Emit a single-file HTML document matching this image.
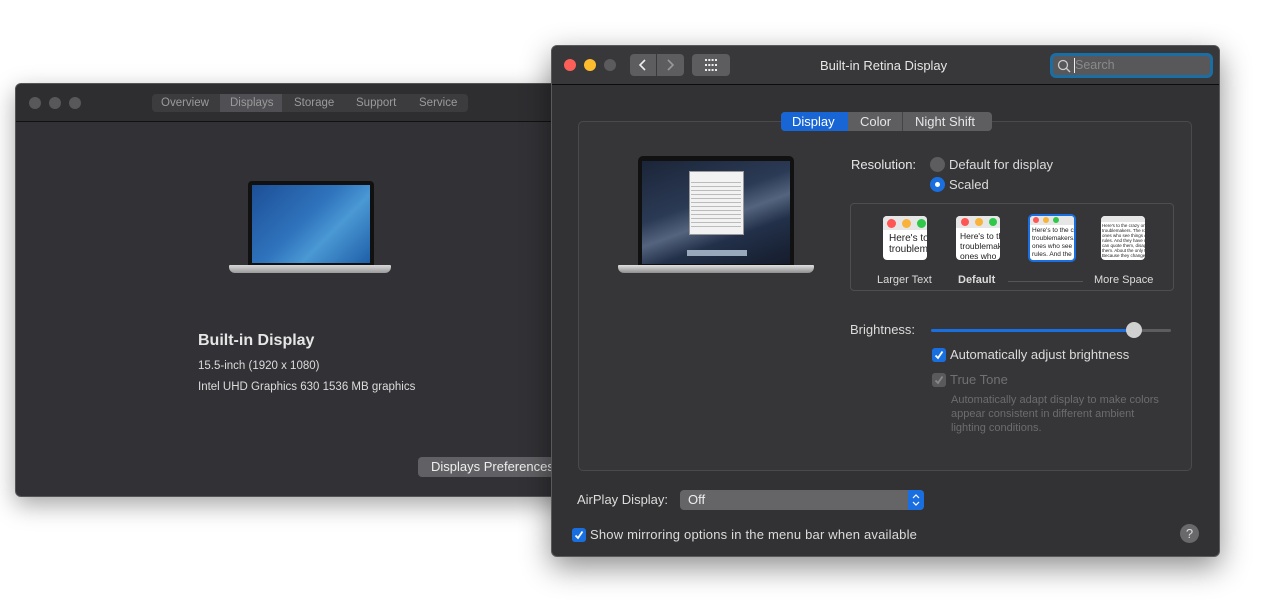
<!DOCTYPE html>
<html><head><style>
*{box-sizing:border-box;margin:0;padding:0}
body{width:1281px;height:608px;background:#fff;position:relative;overflow:hidden;font-family:"Liberation Sans",sans-serif;color:#dcdcdc}
.abs{position:absolute}
.win{position:absolute;border-radius:6px;overflow:hidden}
.dot{position:absolute;width:12px;height:12px;border-radius:50%}
.t{position:absolute;white-space:nowrap}
.cb{position:absolute;width:14px;height:14px;border-radius:3px;background:#1a6fe0}
.cb svg{position:absolute;left:1px;top:1px}
.th div{white-space:nowrap}
</style></head><body>

<!-- back window -->
<div class="win" style="left:15px;top:83px;width:560px;height:414px;background:#323236;box-shadow:0 8px 24px rgba(0,0,0,.35);border:1px solid #555">
 <div class="abs" style="left:0;top:0;width:100%;height:38px;background:#2e2e31;border-bottom:1px solid #111"></div>
 <div class="dot" style="left:13px;top:13px;background:#58585b"></div>
 <div class="dot" style="left:33px;top:13px;background:#58585b"></div>
 <div class="dot" style="left:53px;top:13px;background:#58585b"></div>
 <div class="abs" style="left:136px;top:10px;width:316px;height:18px;background:#3c3c3f;border-radius:4px;font-size:11.5px;color:#9a9a9c">
  <span class="t" style="left:9px;top:3px">Overview</span>
  <div class="abs" style="left:68px;top:0;width:62px;height:18px;background:#505054"></div>
  <span class="t" style="left:78px;top:3px">Displays</span>
  <span class="t" style="left:142px;top:3px">Storage</span>
  <span class="t" style="left:204px;top:3px">Support</span>
  <span class="t" style="left:267px;top:3px">Service</span>
 </div>
 <div class="abs" style="left:232px;top:97px;width:126px;height:84px;background:#111;border-radius:4px 4px 0 0"></div>
 <div class="abs" style="left:236px;top:101px;width:118px;height:78px;background:linear-gradient(135deg,#1d4f96 0%,#2f74bd 45%,#4a98d4 65%,#1f5fa8 100%)"></div>
 <div class="abs" style="left:213px;top:181px;width:162px;height:8px;background:linear-gradient(#d8d8d8,#9a9a9a);border-radius:1px 1px 6px 6px"></div>
 <div class="t" style="left:182px;top:248px;font-size:16px;font-weight:bold;color:#e6e6e6">Built-in Display</div>
 <div class="t" style="left:182px;top:276px;font-size:11.5px;color:#dcdcdc">15.5-inch (1920 x 1080)</div>
 <div class="t" style="left:182px;top:297px;font-size:11.5px;color:#dcdcdc">Intel UHD Graphics 630 1536 MB graphics</div>
 <div class="abs" style="left:402px;top:373px;width:150px;height:20px;background:#616165;border-radius:4px;font-size:13px;color:#eee;padding:2px 0 0 13px">Displays Preferences</div>
</div>

<!-- front window -->
<div class="win" style="left:551px;top:45px;width:669px;height:512px;background:#323234;box-shadow:0 10px 30px rgba(0,0,0,.45);border:1px solid #5a5a5a">
 <div class="abs" style="left:0;top:0;width:100%;height:39px;background:#38383a;border-bottom:1px solid #0c0c0c"></div>
 <div class="dot" style="left:12px;top:13px;background:#fc5f57"></div>
 <div class="dot" style="left:32px;top:13px;background:#fdbb2e"></div>
 <div class="dot" style="left:52px;top:13px;background:#5b5b5d"></div>
 <div class="abs" style="left:78px;top:8px;width:54px;height:22px;background:#5d5d60;border-radius:4px"></div>
 <div class="abs" style="left:104px;top:8px;width:1px;height:22px;background:#3a3a3c"></div>
 <svg class="abs" style="left:78px;top:8px" width="54" height="22"><path d="M15 6 L10 11 L15 16" stroke="#eee" stroke-width="1.6" fill="none"/><path d="M38 6 L43 11 L38 16" stroke="#999" stroke-width="1.6" fill="none"/></svg>
 <div class="abs" style="left:140px;top:8px;width:38px;height:22px;background:#5d5d60;border-radius:4px"></div>
 <svg class="abs" style="left:153px;top:13px" width="12" height="12" fill="#eee"><rect x="0" y="0" width="2" height="2"/><rect x="3.3" y="0" width="2" height="2"/><rect x="6.6" y="0" width="2" height="2"/><rect x="10" y="0" width="2" height="2"/><rect x="0" y="5" width="2" height="2"/><rect x="3.3" y="5" width="2" height="2"/><rect x="6.6" y="5" width="2" height="2"/><rect x="10" y="5" width="2" height="2"/><rect x="0" y="10" width="2" height="2"/><rect x="3.3" y="10" width="2" height="2"/><rect x="6.6" y="10" width="2" height="2"/><rect x="10" y="10" width="2" height="2"/></svg>
 <div class="t" style="left:268px;top:12px;font-size:13px;color:#e6e6e6">Built-in Retina Display</div>
 <div class="abs" style="left:498px;top:7px;width:163px;height:25px;border:3px solid #1b6ea3;border-radius:6px;background:#58585a"></div>
 <svg class="abs" style="left:505px;top:13px" width="14" height="14"><circle cx="6" cy="6" r="4.5" stroke="#ccc" stroke-width="1.3" fill="none"/><path d="M9.3 9.3 L13 13" stroke="#ccc" stroke-width="1.4"/></svg>
 <div class="abs" style="left:522px;top:12px;width:1px;height:15px;background:#eee"></div>
 <div class="t" style="left:523px;top:12px;font-size:12.5px;color:#8a8a8a">Search</div>

 <div class="abs" style="left:26px;top:75px;width:614px;height:350px;border:1px solid #4a4a4c;border-radius:5px;background:#363638"></div>
 <div class="abs" style="left:229px;top:66px;width:211px;height:19px;background:#5e5e61;border-radius:4px;font-size:13px;color:#e6e6e6">
  <div class="abs" style="left:0;top:0;width:67px;height:19px;background:#1866d6;border-radius:4px 0 0 4px"></div>
  <span class="t" style="left:11px;top:2px;color:#fff">Display</span>
  <span class="t" style="left:79px;top:2px">Color</span>
  <div class="abs" style="left:121px;top:0;width:1px;height:19px;background:#444"></div>
  <span class="t" style="left:134px;top:2px">Night Shift</span>
 </div>

 <div class="abs" style="left:86px;top:110px;width:156px;height:110px;background:#111;border-radius:5px 5px 0 0"></div>
 <div class="abs" style="left:90px;top:115px;width:148px;height:103px;background:linear-gradient(160deg,#1b2538 0%,#2b3a55 40%,#55647e 55%,#223049 70%,#151c2c 100%)"></div>
 <div class="abs" style="left:137px;top:125px;width:55px;height:64px;background:#f2f2f2;border:1px solid #999"></div>
 <div class="abs" style="left:139px;top:133px;width:50px;height:50px;background:repeating-linear-gradient(#f2f2f2 0 3px,#bbb 3px 4px)"></div>
 <div class="abs" style="left:135px;top:204px;width:60px;height:6px;background:#9aa8bb"></div>
 <div class="abs" style="left:66px;top:219px;width:196px;height:8px;background:linear-gradient(#e0e0e0,#8e8e8e);border-radius:1px 1px 6px 6px"></div>

 <div class="t" style="left:299px;top:111px;font-size:13px;color:#e6e6e6">Resolution:</div>
 <div class="abs" style="left:378px;top:111px;width:15px;height:15px;border-radius:50%;background:#5d5d60"></div>
 <div class="t" style="left:397px;top:111px;font-size:13px">Default for display</div>
 <div class="abs" style="left:378px;top:131px;width:15px;height:15px;border-radius:50%;background:#1a6fe0"></div>
 <div class="abs" style="left:383px;top:136px;width:5px;height:5px;border-radius:50%;background:#fff"></div>
 <div class="t" style="left:397px;top:131px;font-size:13px">Scaled</div>

 <div class="abs" style="left:298px;top:157px;width:324px;height:88px;border:1px solid #4e4e50;border-radius:4px;background:#363638"></div>
 <div class="abs th" style="left:331px;top:170px;width:44px;height:44px;background:#fff;border-radius:4px;overflow:hidden;font-size:10px;color:#222">
  <div style="height:14px;background:#e6e6e6"></div>
  <div class="dot" style="left:4px;top:3px;width:9px;height:9px;background:#f55"></div><div class="dot" style="left:19px;top:3px;width:9px;height:9px;background:#f9b33a"></div><div class="dot" style="left:34px;top:3px;width:9px;height:9px;background:#2fc84a"></div>
  <div style="padding:3px 0 0 6px;line-height:11px">Here's to<br>troublem</div></div>
 <div class="abs th" style="left:404px;top:170px;width:44px;height:44px;background:#fff;border-radius:4px;overflow:hidden;font-size:8.5px;color:#222">
  <div style="height:12px;background:#e6e6e6"></div>
  <div class="dot" style="left:5px;top:2px;width:8px;height:8px;background:#f55"></div><div class="dot" style="left:19px;top:2px;width:8px;height:8px;background:#f9b33a"></div><div class="dot" style="left:33px;top:2px;width:8px;height:8px;background:#2fc84a"></div>
  <div style="padding:3px 0 0 4px;line-height:10px">Here's to th<br>troublemak<br>ones who</div></div>
 <div class="abs th" style="left:476px;top:168px;width:48px;height:48px;border:2px solid #1a6fe0;border-radius:5px;background:#fff;overflow:hidden;font-size:6.5px;color:#222">
  <div style="height:9px;background:#e6e6e6"></div>
  <div class="dot" style="left:3px;top:1px;width:6px;height:6px;background:#f55"></div><div class="dot" style="left:13px;top:1px;width:6px;height:6px;background:#f9b33a"></div><div class="dot" style="left:23px;top:1px;width:6px;height:6px;background:#2fc84a"></div>
  <div style="padding:2px 0 0 2px;line-height:8px">Here's to the cr<br>troublemakers.<br>ones who see t<br>rules. And the</div></div>
 <div class="abs th" style="left:549px;top:170px;width:44px;height:44px;background:#fff;border-radius:4px;overflow:hidden;font-size:4.5px;color:#222">
  <div style="height:6px;background:#e6e6e6"></div>
  <div style="padding:1px 0 0 1px;line-height:5px">Here's to the crazy one<br>troublemakers. The rou<br>ones who see things di<br>rules. And they have no<br>can quote them, disagr<br>them. About the only th<br>Because they change</div></div>
 <div class="t" style="left:325px;top:228px;font-size:11px">Larger Text</div>
 <div class="t" style="left:406px;top:228px;font-size:11px;font-weight:bold">Default</div>
 <div class="abs" style="left:456px;top:235px;width:75px;height:1px;background:#555"></div>
 <div class="t" style="left:542px;top:228px;font-size:11px">More Space</div>

 <div class="t" style="left:298px;top:276px;font-size:13px">Brightness:</div>
 <div class="abs" style="left:379px;top:283px;width:204px;height:3px;background:#1a6fe0;border-radius:2px"></div>
 <div class="abs" style="left:583px;top:283px;width:36px;height:3px;background:#5d5d60;border-radius:2px"></div>
 <div class="abs" style="left:574px;top:276px;width:16px;height:16px;border-radius:50%;background:#d0d0d0"></div>

 <div class="cb" style="left:380px;top:302px"><svg width="12" height="12"><path d="M2.5 6.5 L5 9 L9.5 2.5" stroke="#fff" stroke-width="1.8" fill="none"/></svg></div>
 <div class="t" style="left:398px;top:301px;font-size:13px">Automatically adjust brightness</div>
 <div class="cb" style="left:380px;top:327px;background:#5a5a5c"><svg width="12" height="12"><path d="M2.5 6.5 L5 9 L9.5 2.5" stroke="#888" stroke-width="1.8" fill="none"/></svg></div>
 <div class="t" style="left:398px;top:326px;font-size:13px;color:#707072">True Tone</div>
 <div class="t" style="left:399px;top:347px;font-size:11px;line-height:14px;color:#6c6c6e">Automatically adapt display to make colors<br>appear consistent in different ambient<br>lighting conditions.</div>

 <div class="t" style="left:25px;top:446px;font-size:13px">AirPlay Display:</div>
 <div class="abs" style="left:128px;top:444px;width:244px;height:20px;background:#656568;border-radius:4px;overflow:hidden">
  <span class="t" style="left:8px;top:2px;font-size:13px;color:#eee">Off</span>
  <div class="abs" style="left:228px;top:0;width:16px;height:20px;background:#1a6fe0"></div>
  <svg class="abs" style="left:231px;top:3px" width="10" height="14"><path d="M2 5 L5 2 L8 5 M2 9 L5 12 L8 9" stroke="#fff" stroke-width="1.2" fill="none"/></svg>
 </div>
 <div class="cb" style="left:20px;top:482px"><svg width="12" height="12"><path d="M2.5 6.5 L5 9 L9.5 2.5" stroke="#fff" stroke-width="1.8" fill="none"/></svg></div>
 <div class="t" style="left:38px;top:481px;font-size:13px;letter-spacing:0.2px">Show mirroring options in the menu bar when available</div>
 <div class="abs" style="left:628px;top:478px;width:19px;height:19px;border-radius:50%;background:#69696c;color:#ddd;font-size:13px;text-align:center;line-height:19px">?</div>
</div>
</body></html>
